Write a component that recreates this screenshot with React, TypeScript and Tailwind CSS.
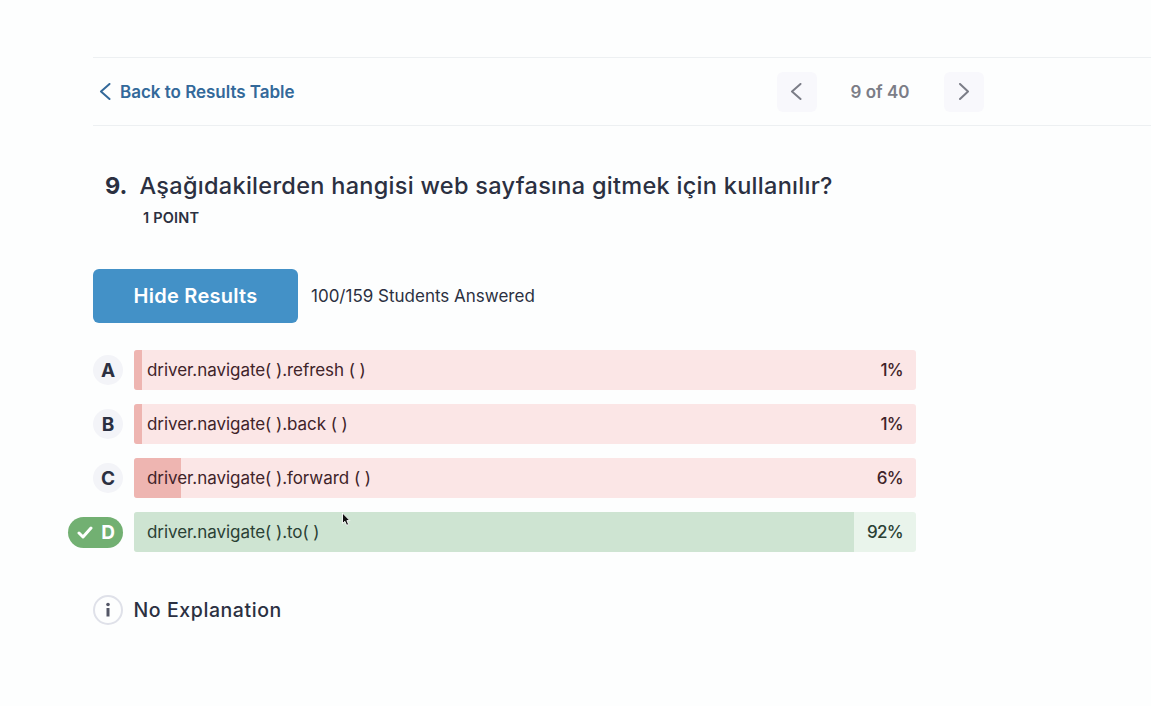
import React from "react";

type Answer = {
  letter: string;
  text: string;
  percent: number;
  fill: number;
  correct?: boolean;
};

const answers: Answer[] = [
  { letter: "A", text: "driver.navigate( ).refresh ( )", percent: 1, fill: 8 },
  { letter: "B", text: "driver.navigate( ).back ( )", percent: 1, fill: 8 },
  { letter: "C", text: "driver.navigate( ).forward ( )", percent: 6, fill: 47 },
  { letter: "D", text: "driver.navigate( ).to( )", percent: 92, fill: 720, correct: true },
];

function Chevron({ flip = false }: { flip?: boolean }) {
  return (
    <svg width="12" height="18" viewBox="0 0 12 18" fill="none" stroke="currentColor" strokeWidth="2" strokeLinecap="round" strokeLinejoin="round">
      <path d={flip ? "M2 1 10 8.5 2 16" : "M10.5 1 2 8.5 10.5 16"} />
    </svg>
  );
}

function Header() {
  return (
    <header className="ml-[93px] flex h-[69px] items-center border-y border-[#edf0f2]">
      <a className="ml-[6px] flex w-[678px] items-center gap-[9px] text-[17px] leading-6 font-semibold tracking-[-0.02px] whitespace-nowrap text-[#33699a]">
        <Chevron />
        <span>Back to Results Table</span>
      </a>
      <nav className="flex items-center text-[#7b7d87]">
        <button className="flex size-10 items-center justify-center rounded-md bg-[#f8f8fc] pr-0.5">
          <Chevron />
        </button>
        <span className="w-[127px] pr-px text-center text-[17px] leading-6 font-semibold whitespace-nowrap">9 of 40</span>
        <button className="flex size-10 items-center justify-center rounded-md bg-[#f8f8fc]">
          <Chevron flip />
        </button>
      </nav>
    </header>
  );
}

function Marker({ letter, correct }: { letter: string; correct?: boolean }) {
  if (correct) {
    return (
      <div className="flex h-[31px] w-[55px] items-center justify-between rounded-full bg-[#72b072] pr-2 pl-[9px] text-white">
        <svg width="16" height="13" viewBox="0 0 16 13" fill="none" stroke="currentColor" strokeWidth="3" strokeLinecap="round" strokeLinejoin="round">
          <path d="M2 7l4 4L14 2" />
        </svg>
        <span className="text-[19px] leading-none font-bold">{letter}</span>
      </div>
    );
  }
  return (
    <div className="flex size-[30px] items-center justify-center rounded-full bg-[#f3f4f8] pt-px text-[19px] leading-none font-bold">
      {letter}
    </div>
  );
}

function AnswerRow({ letter, text, percent, fill, correct }: Answer) {
  return (
    <li className="flex h-10 items-center">
      <div className="flex w-[123px] justify-end">
        <Marker letter={letter} correct={correct} />
      </div>
      <div
        className={`relative ml-[10.5px] flex h-full w-[782px] items-center justify-between overflow-hidden rounded-[3px] px-[13.5px] text-[17px] leading-6 ${
          correct ? "bg-[#e9f4eb] text-[#2a4034]" : "bg-[#fbe6e6] text-[#402329]"
        }`}
      >
        <div
          className={`absolute inset-y-0 left-0 ${correct ? "bg-[#cee4d2]" : "bg-[#eeb5b1]"}`}
          style={{ width: fill }}
        />
        <span className="relative tracking-[-0.05px] whitespace-nowrap">{text}</span>
        <span className="relative -mr-px font-medium tracking-[-0.7px]">{percent}%</span>
      </div>
    </li>
  );
}

export default function App() {
  return (
    <div className="relative h-[706px] w-full overflow-hidden bg-[#fdfefe] pt-[57px] font-['Inter',sans-serif] text-[#2b3041]">
      <Header />
      <main>
        <h1 className="mt-11 ml-[105px] flex h-8 items-center text-[23.5px] leading-8 whitespace-nowrap">
          <span className="w-[34.5px] font-bold">9.</span>
          <span className="font-medium tracking-[0.29px]">Aşağıdakilerden hangisi web sayfasına gitmek için kullanılır?</span>
        </h1>
        <p className="mt-[6px] ml-[143px] text-[14.5px] leading-5 font-semibold tracking-[0.2px]">1 POINT</p>

        <div className="mt-[41px] ml-[93px] flex items-center gap-[13px]">
          <button className="h-[54px] w-[205px] rounded-md bg-[#4391c7] text-[20px] leading-6 font-semibold tracking-[0.25px] text-white">
            <span>Hide Results</span>
          </button>
          <span className="text-[17px] leading-6 whitespace-nowrap">100/159 Students Answered</span>
        </div>

        <ul className="mt-[27px] flex flex-col gap-[14px]">
          {answers.map((answer) => (
            <AnswerRow key={answer.letter} {...answer} />
          ))}
        </ul>

        <div className="mt-[43px] ml-[93px] flex items-center gap-[10.5px]">
          <svg width="30" height="30" viewBox="0 0 30 30" fill="none">
            <circle cx="15" cy="15" r="14" stroke="#dfe1e9" strokeWidth="2" />
            <circle cx="15" cy="9.5" r="1.8" fill="#535666" />
            <path d="M15 13v8.5" stroke="#535666" strokeWidth="3" />
          </svg>
          <span className="text-[19.5px] leading-6 font-medium tracking-[0.58px] whitespace-nowrap">No Explanation</span>
        </div>
      </main>

      <svg className="absolute top-[512px] left-[341px]" width="10" height="15" viewBox="0 0 10 15">
        <path d="M1.5 1v10.5l2.4-2.2 1.7 4 2-.9-1.7-3.8h3z" fill="#111" stroke="#fff" strokeWidth=".9" />
      </svg>
    </div>
  );
}
